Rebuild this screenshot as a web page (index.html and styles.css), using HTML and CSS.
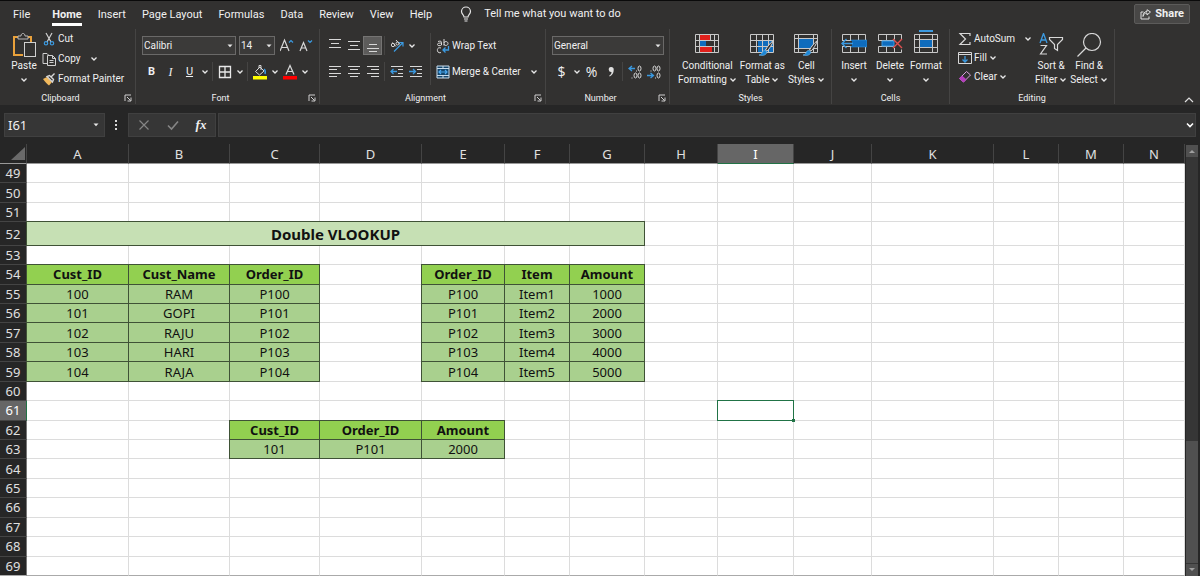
FILE: index.html
```html
<!DOCTYPE html>
<html lang="en">
<head>
  <meta charset="utf-8">
  <title>Double VLOOKUP</title>
  <link rel="stylesheet" href="styles.css">
</head>
<body>

<!-- shared shapes -->
<svg class="defs" aria-hidden="true">
  <symbol id="chev" viewBox="0 0 8 8"><path d="M1.5 2.5 4 5l2.500-2.500" fill="none" stroke="#e8e8e8" stroke-width="1.300"/></symbol>
  <symbol id="tri" viewBox="0 0 8 8"><path d="M1.500 2.500h5L4 5.300z" fill="#e8e8e8"/></symbol>
  <symbol id="launch" viewBox="0 0 8 8"><path d="M1 7V1h6M3 3l3.500 3.500M7 3.500V7H3.500" fill="none" stroke="#d0d0d0"/></symbol>
  <symbol id="brush" viewBox="0 0 18 18"><path d="M16.500 1.500C13 4 10 8 8.500 11l1.500 1.200C12.500 9.500 15 6 16.500 1.500z" fill="#323130" stroke="#d8d8d8"/><path d="M8.500 11.500c-2-.5-3 .8-3.500 2.500-.4 1.200-1.500 1.800-3 2 3 1 7 .5 7.800-2.500z" fill="#1b86d6" stroke="#6cb5ea" stroke-width=".7"/></symbol>
</svg>

<header class="ribbon">
  <nav class="tabs">
    <a href="#" class="file">File</a>
    <a href="#" class="active">Home</a>
    <a href="#">Insert</a>
    <a href="#">Page Layout</a>
    <a href="#">Formulas</a>
    <a href="#">Data</a>
    <a href="#">Review</a>
    <a href="#">View</a>
    <a href="#">Help</a>
    <a href="#" class="tell">
      <svg width="12" height="16" viewBox="0 0 12 16"><path d="M4 11c0-2-2.500-2.700-2.500-5.500a4.500 4.500 0 0 1 9 0C10.500 8.300 8 9 8 11zM4 13h4M4.500 15h3" fill="none" stroke="#e8e8e8" stroke-width="1.200"/></svg>
      Tell me what you want to do
    </a>
    <button class="share">
      <svg width="11" height="11" viewBox="0 0 11 11"><path d="M3.500 3H1v7h8V7.500M3 7.500C3.500 5 5 4 7 4V6l3.500-3L7 .7V2.500C4.500 2.500 3 4.500 3 7.500z" fill="none" stroke="#e0e0e0"/></svg>
      Share
    </button>
  </nav>

  <div class="groups">
    <section class="group">
      <div class="body clipboard">
        <button class="big">
          <svg width="24" height="26" viewBox="0 0 24 26"><path d="M6 4H2v18h9M15 4h4v5" fill="none" stroke="#e9a13b" stroke-width="2"/><path d="M6 6V3h3c0-3.500 4-3.500 4 0h3v3z" fill="#323130" stroke="#b8b8b8"/><rect x="12.500" y="9.500" width="11" height="14" fill="#323130" stroke="#d0d0d0"/></svg>
          <span>Paste</span>
          <svg class="c"><use href="#chev"/></svg>
        </button>
        <div class="stack">
          <button class="line">
            <svg width="14" height="14" viewBox="0 0 14 14"><path d="M4 1l5 9M10 1 5 10" fill="none" stroke="#d0d0d0" stroke-width="1.200"/><circle cx="4" cy="11.300" r="1.700" fill="none" stroke="#3b9ae1" stroke-width="1.200"/><circle cx="10" cy="11.300" r="1.700" fill="none" stroke="#3b9ae1" stroke-width="1.200"/></svg>
            Cut
          </button>
          <button class="line">
            <svg width="14" height="14" viewBox="0 0 14 14"><path d="M5 11.500H1V1.500h4l2 2M5.500 3.500h5l3 3v7h-8zM10.500 3.500v3h3M7.500 8.500h4M7.500 10.500h4" fill="none" stroke="#d0d0d0"/></svg>
            Copy
            <svg class="c far"><use href="#chev"/></svg>
          </button>
          <button class="line">
            <svg width="14" height="14" viewBox="0 0 14 14"><path d="M1 7l4-2 5 5-3 3.500C5 12 3 10 1 7z" fill="#f0b85c"/><path d="M5 4.500l5.500 5.500 1-2.500L7.500 3.500zM9 5l3.500-3.500" fill="none" stroke="#d8d8d8" stroke-width="1.400"/></svg>
            Format Painter
          </button>
        </div>
      </div>
      <h2>Clipboard <svg class="c"><use href="#launch"/></svg></h2>
    </section>

    <section class="group">
      <div class="body rows">
        <div class="row">
          <label class="combo font-name"><select aria-label="Font"><option>Calibri</option></select><svg class="c"><use href="#tri"/></svg></label>
          <label class="combo font-size"><select aria-label="Font size"><option>14</option></select><svg class="c"><use href="#tri"/></svg></label>
          <button class="tool" aria-label="Increase font size"><svg width="16" height="16" viewBox="0 0 16 16"><path d="M0 13 4.500 2 9 13M1.500 9.500h6" fill="none" stroke="#d8d8d8" stroke-width="1.200"/><path d="M9 4.500l2-2 2 2" fill="none" stroke="#3b9ae1" stroke-width="1.200"/></svg></button>
          <button class="tool" aria-label="Decrease font size"><svg width="16" height="16" viewBox="0 0 16 16"><path d="M1 13 4.500 4.500 8 13M2.500 10h4" fill="none" stroke="#d8d8d8" stroke-width="1.200"/><path d="M9 2.500l2 2 2-2" fill="none" stroke="#3b9ae1" stroke-width="1.200"/></svg></button>
        </div>
        <div class="row">
          <button class="tool"><b>B</b></button>
          <button class="tool serif"><i>I</i></button>
          <button class="tool"><u>U</u></button>
          <button class="drop" aria-label="Underline options"><svg class="c"><use href="#chev"/></svg></button>
          <span class="sep"></span>
          <button class="tool" aria-label="Borders"><svg width="14" height="14" viewBox="0 0 14 14"><path d="M1.500 1.500h11v11h-11zM7 1.500v11M1.500 7h11" fill="none" stroke="#e8e8e8" stroke-width="1.300"/></svg></button>
          <button class="drop" aria-label="Border options"><svg class="c"><use href="#chev"/></svg></button>
          <span class="sep"></span>
          <button class="tool" aria-label="Fill color"><svg width="14" height="16" viewBox="0 0 14 16"><path d="M2.500 7.500 7 3l4 4-4.500 4zM6 4V1.500h2V6" fill="none" stroke="#d8d8d8"/><path d="M11 5c1.500 1 1.500 3 1 5" fill="none" stroke="#3b9ae1" stroke-width="1.500"/><path d="M0 12h14v3.500H0z" fill="#ff0"/></svg></button>
          <button class="drop" aria-label="Fill colors"><svg class="c"><use href="#chev"/></svg></button>
          <button class="tool" aria-label="Font color"><svg width="14" height="16" viewBox="0 0 14 16"><path d="M3 10.500 7 1.500l4 9M4.500 7.500h5" fill="none" stroke="#d8d8d8" stroke-width="1.200"/><path d="M0 12h14v3.500H0z" fill="#f00"/></svg></button>
          <button class="drop" aria-label="Font colors"><svg class="c"><use href="#chev"/></svg></button>
        </div>
      </div>
      <h2>Font <svg class="c"><use href="#launch"/></svg></h2>
    </section>

    <section class="group">
      <div class="body split">
        <div class="rows">
          <div class="row">
            <button class="tool" aria-label="Top align"><svg width="14" height="14" viewBox="0 0 14 14"><path d="M1 .5h12M3 4.500h8M1 8.500h12" stroke="#d8d8d8"/></svg></button>
            <button class="tool" aria-label="Middle align"><svg width="14" height="14" viewBox="0 0 14 14"><path d="M1 2.500h12M3 6.500h8M1 10.500h12" stroke="#d8d8d8"/></svg></button>
            <button class="tool on" aria-label="Bottom align"><svg width="14" height="14" viewBox="0 0 14 14"><path d="M3 5.500h8M1 9.500h12M3 12.500h8" stroke="#d8d8d8"/></svg></button>
            <span class="sep"></span>
            <button class="tool" aria-label="Orientation"><svg width="16" height="16" viewBox="0 0 16 16"><g fill="none" stroke="#d8d8d8"><circle cx="4" cy="7" r="1.700"/><path d="M3.500 4.500l3.500 4M7 2l4 4.500"/><circle cx="8.500" cy="5.500" r="1.500"/></g><path d="M5 13.500l8.500-8.500M10 4.500h4v4" fill="none" stroke="#3b9ae1" stroke-width="1.200"/></svg></button>
            <button class="drop" aria-label="Orientation options"><svg class="c"><use href="#chev"/></svg></button>
          </div>
          <div class="row">
            <button class="tool" aria-label="Align left"><svg width="14" height="14" viewBox="0 0 14 14"><path d="M1 1.500h12M1 4.500h8M1 8.500h12M1 11.500h8" stroke="#d8d8d8"/></svg></button>
            <button class="tool" aria-label="Center"><svg width="14" height="14" viewBox="0 0 14 14"><path d="M1 1.500h12M3 4.500h8M1 8.500h12M3 11.500h8" stroke="#d8d8d8"/></svg></button>
            <button class="tool" aria-label="Align right"><svg width="14" height="14" viewBox="0 0 14 14"><path d="M1 1.500h12M5 4.500h8M1 8.500h12M5 11.500h8" stroke="#d8d8d8"/></svg></button>
            <span class="sep"></span>
            <button class="tool" aria-label="Decrease indent"><svg width="14" height="14" viewBox="0 0 14 14"><path d="M1 1.500h12M8 4.500h5M8 8.500h5M1 11.500h12" stroke="#d8d8d8"/><path d="M7 6.500H1.500M3.500 4 1 6.500 3.500 9" fill="none" stroke="#3b9ae1" stroke-width="1.300"/></svg></button>
            <button class="tool" aria-label="Increase indent"><svg width="14" height="14" viewBox="0 0 14 14"><path d="M1 1.500h12M8 4.500h5M8 8.500h5M1 11.500h12" stroke="#d8d8d8"/><path d="M0 6.500h5.500M4 4 6.500 6.500 4 9" fill="none" stroke="#3b9ae1" stroke-width="1.300"/></svg></button>
          </div>
        </div>
        <span class="sep tall"></span>
        <div class="rows">
          <button class="line">
            <svg width="14" height="16" viewBox="0 0 14 16"><g fill="none" stroke="#d8d8d8"><path d="M2 3.500c3-1 3.500 0 3.500 1v2.500c-1.500 1-4 1-4-.5s2-1.500 4-1.500M8 1v6.500M8 5c0-2 4-2 4 .5S8 8 8 6M5 10c-3-1-4 1-3.500 3s2.500 2 3.500 1.500"/></g><path d="M12.500 8v4H7.500M9.500 9.500 7 12l2.500 2.500" fill="none" stroke="#3b9ae1" stroke-width="1.300"/></svg>
            Wrap Text
          </button>
          <button class="line">
            <svg width="14" height="14" viewBox="0 0 14 14"><path d="M1 1h12v12H1zM1 3.500h12M1 10.500h12M7 1v2.500M7 10.500V13" fill="#16466b" stroke="#c8dcec"/><path d="M3 7h8M5 5 3 7l2 2M9 5l2 2-2 2" fill="none" stroke="#4ba9f0" stroke-width="1.200"/></svg>
            Merge &amp; Center
            <svg class="c far"><use href="#chev"/></svg>
          </button>
        </div>
      </div>
      <h2>Alignment <svg class="c"><use href="#launch"/></svg></h2>
    </section>

    <section class="group">
      <div class="body rows">
        <div class="row">
          <label class="combo number"><select aria-label="Number format"><option>General</option></select><svg class="c"><use href="#tri"/></svg></label>
        </div>
        <div class="row">
          <button class="tool sign">$</button>
          <button class="drop" aria-label="Currency options"><svg class="c"><use href="#chev"/></svg></button>
          <button class="tool sign">%</button>
          <button class="tool" aria-label="Comma style"><svg width="10" height="14" viewBox="0 0 10 14"><path d="M5 2a2.500 2.500 0 0 1 2.700 3c0 3-1.200 5-4 6.500l-.5-.7C5 9.500 5.500 8.500 5.500 7A2.500 2.500 0 1 1 5 2z" fill="#e0e0e0"/></svg></button>
          <span class="sep"></span>
          <button class="tool" aria-label="Increase decimal"><svg width="14" height="14" viewBox="0 0 14 14"><path d="M7 3.500H1.500M4 1 1 3.500 4 6" fill="none" stroke="#3b9ae1" stroke-width="1.300"/><g fill="none" stroke="#d8d8d8"><ellipse cx="11.500" cy="3.500" rx="1.500" ry="2.500"/><ellipse cx="7.500" cy="10.500" rx="1.500" ry="2.500"/><ellipse cx="11.500" cy="10.500" rx="1.500" ry="2.500"/><path d="M8 6h1M3.500 13h1"/></g></svg></button>
          <button class="tool" aria-label="Decrease decimal"><svg width="14" height="14" viewBox="0 0 14 14"><path d="M0 10.500h6M3.500 8l3 2.500-3 2.500" fill="none" stroke="#3b9ae1" stroke-width="1.300"/><g fill="none" stroke="#d8d8d8"><ellipse cx="7.500" cy="3.500" rx="1.500" ry="2.500"/><ellipse cx="11.500" cy="3.500" rx="1.500" ry="2.500"/><ellipse cx="11.500" cy="10.500" rx="1.500" ry="2.500"/><path d="M3.500 6h1M8 13h1"/></g></svg></button>
        </div>
      </div>
      <h2>Number <svg class="c"><use href="#launch"/></svg></h2>
    </section>

    <section class="group">
      <div class="body bigs styles">
        <button class="big">
          <svg width="26" height="22" viewBox="0 0 26 22"><path d="M1.500 1.500h23v18h-23zM5.500 1.500v18M16.500 1.500v18M20.500 1.500v18M1.500 7.500h23M1.500 13.500h23" fill="none" stroke="#c8c8c8"/><path d="M6 2h10v5H6zM6 14h12v5H6z" fill="#e0201b"/><path d="M6 8h6v5H6z" fill="#0f6cbd"/><path d="M12 8h5v5h-5z" fill="#323130"/></svg>
          <span>Conditional</span>
          <span>Formatting <svg class="c"><use href="#chev"/></svg></span>
        </button>
        <button class="big">
          <svg width="26" height="24" viewBox="0 0 26 24"><path d="M9 8h15v12H9z" fill="#0f6cbd"/><path d="M1.500 1.500h23v18h-23zM7.500 1.500v18M13.500 1.500v18M19.500 1.500v18M1.500 7.500h23M1.500 13.500h23" fill="none" stroke="#c8c8c8"/><use href="#brush" x="8" y="6" width="18" height="18"/></svg>
          <span>Format as</span>
          <span>Table <svg class="c"><use href="#chev"/></svg></span>
        </button>
        <button class="big">
          <svg width="26" height="24" viewBox="0 0 26 24"><path d="M5 6h16v10H5z" fill="#0f6cbd"/><path d="M1.500 1.500h23v18h-23zM5.500 1.500v18M20.500 1.500v18M1.500 5.500h23M1.500 15.500h23" fill="none" stroke="#c8c8c8"/><use href="#brush" x="8" y="6" width="18" height="18"/></svg>
          <span>Cell</span>
          <span>Styles <svg class="c"><use href="#chev"/></svg></span>
        </button>
      </div>
      <h2>Styles</h2>
    </section>

    <section class="group">
      <div class="body bigs cells">
        <button class="big">
          <svg width="26" height="22" viewBox="0 0 26 22"><path d="M1.500 1.500h23v18h-23zM9.500 1.500v18M17.500 1.500v18M1.500 7.500h23M1.500 13.500h23" fill="none" stroke="#c8c8c8"/><path d="M10 7h16v7H10z" fill="#0f6cbd" stroke="#3b9ae1" stroke-width=".5"/><path d="M0 8h11v5H0z" fill="#323130"/><path d="M12 10.500H1M5.500 6 1 10.500 5.500 15" fill="none" stroke="#3b9ae1" stroke-width="1.400"/></svg>
          <span>Insert</span>
          <svg class="c"><use href="#chev"/></svg>
        </button>
        <button class="big">
          <svg width="26" height="22" viewBox="0 0 26 22"><path d="M1.500 7.500v-6h23v5M1.500 7.500h15M1.500 13.500v6h23v-3M1.500 13.500h15M9.500 1.500v18M17.500 1.500v5M17.500 15v4.500" fill="none" stroke="#c8c8c8"/><path d="M5 8h12v5H5z" fill="#0f6cbd" stroke="#3b9ae1"/><path d="M16 6l9 9M25 6l-9 9" stroke="#e05050" stroke-width="1.400"/></svg>
          <span>Delete</span>
          <svg class="c"><use href="#chev"/></svg>
        </button>
        <button class="big format">
          <svg width="26" height="26" viewBox="0 0 26 26"><path d="M6 1h14" stroke="#3b9ae1" stroke-width="2"/><path d="M1.500 4.500h23v18h-23zM6.500 4.500v18M19.500 4.500v18M1.500 9.500h23M1.500 17.500h23" fill="none" stroke="#c8c8c8"/><path d="M7 10h12v7H7z" fill="#0f6cbd"/></svg>
          <span>Format</span>
          <svg class="c"><use href="#chev"/></svg>
        </button>
      </div>
      <h2>Cells</h2>
    </section>

    <section class="group">
      <div class="body editing">
        <div class="stack">
          <button class="line">
            <svg width="14" height="14" viewBox="0 0 14 14"><path d="M12 4V1.500H2L7.500 7 2 12.500h10V10" fill="none" stroke="#d8d8d8" stroke-width="1.200"/></svg>
            AutoSum
            <svg class="c far"><use href="#chev"/></svg>
          </button>
          <button class="line">
            <svg width="14" height="14" viewBox="0 0 14 14"><path d="M.5 1.500h13v11H.5zM.5 3.500h13" fill="none" stroke="#d8d8d8"/><path d="M7 5v6M4.500 8.500 7 11l2.500-2.500" fill="none" stroke="#3b9ae1" stroke-width="1.300"/></svg>
            Fill <svg class="c"><use href="#chev"/></svg>
          </button>
          <button class="line">
            <svg width="14" height="14" viewBox="0 0 14 14"><path d="M1.500 8.500 8.500 1.500l4 3.500-7 7z" fill="none" stroke="#d9a0dc"/><path d="M1 8.500 4 5.500 8.500 9.500l-3 3z" fill="#b53cbc"/></svg>
            Clear <svg class="c"><use href="#chev"/></svg>
          </button>
        </div>
        <button class="big">
          <svg width="26" height="24" viewBox="0 0 26 24"><path d="M2 10 5.500 .5 9 10M3 7h5" fill="none" stroke="#3b9ae1" stroke-width="1.300"/><path d="M2.500 12.500h6l-6 8.500h6.500" fill="none" stroke="#d8d8d8" stroke-width="1.200"/><path d="M11.500 4.500h13v2l-5 5v6l-3-2v-4l-5-5z" fill="none" stroke="#d8d8d8" stroke-width="1.200"/></svg>
          <span>Sort &amp;</span>
          <span>Filter <svg class="c"><use href="#chev"/></svg></span>
        </button>
        <button class="big">
          <svg width="26" height="26" viewBox="0 0 26 26"><circle cx="16" cy="9" r="8.500" fill="none" stroke="#d8d8d8" stroke-width="1.200"/><path d="M10 15l-8.500 8.500" stroke="#d8d8d8" stroke-width="1.300"/></svg>
          <span>Find &amp;</span>
          <span>Select <svg class="c"><use href="#chev"/></svg></span>
        </button>
      </div>
      <h2>Editing</h2>
    </section>

    <button class="collapse" aria-label="Collapse the ribbon"><svg width="10" height="8" viewBox="0 0 10 8"><path d="M1 6l4-4 4 4" fill="none" stroke="#e0e0e0" stroke-width="1.200"/></svg></button>
  </div>
</header>

<div class="formula">
  <div class="name-box">
    <input type="text" value="I61" aria-label="Name box">
    <button class="drop" aria-label="Names"><svg class="c"><use href="#tri"/></svg></button>
  </div>
  <svg class="dots" width="4" height="12" viewBox="0 0 4 12"><path d="M1 1h2v2H1zM1 5h2v2H1zM1 9h2v2H1z" fill="#d8d8d8"/></svg>
  <div class="entry">
    <button aria-label="Cancel"><svg width="12" height="12" viewBox="0 0 12 12"><path d="M1.500 1.500l9 9M10.500 1.500l-9 9" stroke="#858585" stroke-width="1.200"/></svg></button>
    <button aria-label="Enter"><svg width="12" height="12" viewBox="0 0 12 12"><path d="M1 6.500l3.500 3.500L11 2.500" fill="none" stroke="#858585" stroke-width="1.600"/></svg></button>
    <button class="fx">fx</button>
  </div>
  <div class="formula-box">
    <input type="text" aria-label="Formula">
    <button class="drop" aria-label="Expand formula bar"><svg class="c" viewBox="0 0 8 8"><path d="M1 2.500 4 5.500l3-3" fill="none" stroke="#fff" stroke-width="1.600"/></svg></button>
  </div>
</div>

<main class="sheet">
  <table>
    <colgroup>
      <col class="w-num"><col class="w-a"><col class="w-b"><col class="w-c"><col class="w-d"><col class="w-e"><col class="w-f"><col class="w-g"><col class="w-h"><col class="w-i"><col class="w-j"><col class="w-k"><col class="w-l"><col class="w-m"><col class="w-n">
    </colgroup>
    <thead>
      <tr><th class="corner"><svg width="16" height="16" viewBox="0 0 16 16"><path d="M15 1v13H1z" fill="#6a6a6a"/></svg></th><th>A</th><th>B</th><th>C</th><th>D</th><th>E</th><th>F</th><th>G</th><th>H</th><th class="sel">I</th><th>J</th><th>K</th><th>L</th><th>M</th><th>N</th></tr>
    </thead>
    <tbody>
      <tr><th>49</th><td></td><td></td><td></td><td></td><td></td><td></td><td></td><td></td><td></td><td></td><td></td><td></td><td></td><td></td></tr>
      <tr><th>50</th><td></td><td></td><td></td><td></td><td></td><td></td><td></td><td></td><td></td><td></td><td></td><td></td><td></td><td></td></tr>
      <tr><th>51</th><td></td><td></td><td></td><td></td><td></td><td></td><td></td><td></td><td></td><td></td><td></td><td></td><td></td><td></td></tr>
      <tr class="title"><th>52</th><td colspan="7" class="t">Double VLOOKUP</td><td></td><td></td><td></td><td></td><td></td><td></td><td></td></tr>
      <tr><th>53</th><td></td><td></td><td></td><td></td><td></td><td></td><td></td><td></td><td></td><td></td><td></td><td></td><td></td><td></td></tr>
      <tr><th>54</th><td class="h">Cust_ID</td><td class="h">Cust_Name</td><td class="h">Order_ID</td><td></td><td class="h">Order_ID</td><td class="h">Item</td><td class="h">Amount</td><td></td><td></td><td></td><td></td><td></td><td></td><td></td></tr>
      <tr><th>55</th><td class="v">100</td><td class="v">RAM</td><td class="v">P100</td><td></td><td class="v">P100</td><td class="v">Item1</td><td class="v">1000</td><td></td><td></td><td></td><td></td><td></td><td></td><td></td></tr>
      <tr><th>56</th><td class="v">101</td><td class="v">GOPI</td><td class="v">P101</td><td></td><td class="v">P101</td><td class="v">Item2</td><td class="v">2000</td><td></td><td></td><td></td><td></td><td></td><td></td><td></td></tr>
      <tr><th>57</th><td class="v">102</td><td class="v">RAJU</td><td class="v">P102</td><td></td><td class="v">P102</td><td class="v">Item3</td><td class="v">3000</td><td></td><td></td><td></td><td></td><td></td><td></td><td></td></tr>
      <tr><th>58</th><td class="v">103</td><td class="v">HARI</td><td class="v">P103</td><td></td><td class="v">P103</td><td class="v">Item4</td><td class="v">4000</td><td></td><td></td><td></td><td></td><td></td><td></td><td></td></tr>
      <tr><th>59</th><td class="v">104</td><td class="v">RAJA</td><td class="v">P104</td><td></td><td class="v">P104</td><td class="v">Item5</td><td class="v">5000</td><td></td><td></td><td></td><td></td><td></td><td></td><td></td></tr>
      <tr><th>60</th><td></td><td></td><td></td><td></td><td></td><td></td><td></td><td></td><td></td><td></td><td></td><td></td><td></td><td></td></tr>
      <tr><th class="sel">61</th><td></td><td></td><td></td><td></td><td></td><td></td><td></td><td></td><td class="cursor"></td><td></td><td></td><td></td><td></td><td></td></tr>
      <tr><th>62</th><td></td><td></td><td class="h">Cust_ID</td><td class="h">Order_ID</td><td class="h">Amount</td><td></td><td></td><td></td><td></td><td></td><td></td><td></td><td></td><td></td></tr>
      <tr><th>63</th><td></td><td></td><td class="v">101</td><td class="v">P101</td><td class="v">2000</td><td></td><td></td><td></td><td></td><td></td><td></td><td></td><td></td><td></td></tr>
      <tr><th>64</th><td></td><td></td><td></td><td></td><td></td><td></td><td></td><td></td><td></td><td></td><td></td><td></td><td></td><td></td></tr>
      <tr><th>65</th><td></td><td></td><td></td><td></td><td></td><td></td><td></td><td></td><td></td><td></td><td></td><td></td><td></td><td></td></tr>
      <tr><th>66</th><td></td><td></td><td></td><td></td><td></td><td></td><td></td><td></td><td></td><td></td><td></td><td></td><td></td><td></td></tr>
      <tr><th>67</th><td></td><td></td><td></td><td></td><td></td><td></td><td></td><td></td><td></td><td></td><td></td><td></td><td></td><td></td></tr>
      <tr><th>68</th><td></td><td></td><td></td><td></td><td></td><td></td><td></td><td></td><td></td><td></td><td></td><td></td><td></td><td></td></tr>
      <tr class="last"><th>69</th><td></td><td></td><td></td><td></td><td></td><td></td><td></td><td></td><td></td><td></td><td></td><td></td><td></td><td></td></tr>
    </tbody>
  </table>
  <div class="scroll">
    <button aria-label="Scroll up"><svg width="8" height="6" viewBox="0 0 8 6"><path d="M1 5h6L4 2z" fill="#a0a0a0"/></svg></button>
    <div class="track"><div class="thumb"></div></div>
    <button aria-label="Scroll down"><svg width="8" height="6" viewBox="0 0 8 6"><path d="M1 1h6L4 4z" fill="#a0a0a0"/></svg></button>
  </div>
</main>

</body>
</html>
```
FILE: styles.css
```css
* { box-sizing: border-box; }
body { margin: 0; height: 100vh; display: flex; flex-direction: column; overflow: hidden; background: #262626; color: #f0f0f0; font: 10px/14px Roboto, "Noto Sans", sans-serif; }
button, input, select { font: inherit; color: inherit; background: none; border: 0; padding: 0; margin: 0; }
a { color: inherit; text-decoration: none; }
svg { display: block; flex: none; }
.defs { display: none; }
.c { width: 8px; height: 8px; }

/* tabs */
.ribbon { background: #323130; border-top: 1px solid #0a0a0a; }
.tabs { display: flex; align-items: center; gap: 16px; height: 26px; padding: 0 10px 0 13px; font-size: 11px; white-space: nowrap; }
.tabs a { height: 23px; line-height: 24px; }
.tabs .file { margin-right: 6px; }
.tabs .active { font-weight: bold; border-bottom: 3px solid #fff; }
.tabs .tell { display: flex; align-items: center; gap: 12px; margin-left: 12px; }
.share { display: flex; align-items: center; gap: 4px; height: 20px; margin-left: auto; padding: 0 5px; font-weight: bold; background: #484746; border: 1px solid #5c5b5a; border-radius: 2px; }

/* ribbon groups */
.groups { display: grid; grid-template-columns: 136px 184px 226px 124px 162px 118px 165px 1fr; padding: 2px 0; height: 78px; }
.group { display: flex; flex-direction: column; border-right: 1px solid #454443; }
.group h2 { margin: 0; display: grid; grid-template-columns: 1fr auto; align-items: center; font-size: 9px; font-weight: normal; line-height: 12px; text-align: center; }
.group h2 svg { margin: 0 3px; }
.body { height: 63px; white-space: nowrap; }
.clipboard, .editing, .split, .bigs { display: flex; }
.clipboard { padding-left: 8px; gap: 2px; }
.stack .line { height: 20px; }
.editing { padding-left: 8px; gap: 3px; }
.editing .stack { width: 74px; }
.editing .line { height: 19px; }
.line { display: flex; align-items: center; gap: 2px; height: 19px; }
.far { margin-left: 7px; }
.big { display: flex; flex-direction: column; align-items: center; min-width: 32px; height: 58px; padding-top: 4px; line-height: 14px; }
.big > svg:first-child { margin-bottom: auto; }
.big > .c { margin: 3px 0; }
.big span { display: flex; align-items: center; gap: 2px; }
.bigs { padding-left: 8px; }
.styles { gap: 3px; }
.cells { gap: 4px; padding-left: 6px; }
.format { padding-top: 1px; }
.rows { display: flex; flex-direction: column; gap: 7px; padding-top: 7px; }
.body.rows { padding-left: 6px; }
.row { display: flex; align-items: center; height: 19px; }
.split { padding-left: 5px; }
.tool { display: flex; align-items: center; justify-content: center; width: 19px; height: 19px; font-size: 11px; }
.tool.on { background: #5d5c5b; border: 1px solid #757473; }
.serif { font-family: "Liberation Serif", serif; font-size: 12px; }
.sign { font: 14px "Open Sans", sans-serif; }
.drop { display: flex; align-items: center; justify-content: center; width: 11px; height: 19px; }
.sep { width: 1px; height: 19px; margin: 0 2px; background: #454443; }
.sep.tall { height: 52px; margin: 4px 5px 0 5px; }
.combo { display: grid; height: 19px; margin-right: 3px; background: #3b3a39; border: 1px solid #6a6968; }
.combo select, .combo svg { grid-area: 1 / 1; }
.combo select { appearance: none; width: 100%; padding-left: 1px; }
.combo svg { align-self: center; justify-self: end; margin-right: 1px; pointer-events: none; }
.font-name { width: 94px; }
.font-size { width: 36px; }
.number { width: 112px; }
.collapse { justify-self: end; align-self: end; padding: 0 6px 0 0; }

/* formula bar */
.formula { display: flex; align-items: center; height: 39px; padding: 0 4px; }
.name-box, .entry, .formula-box { display: flex; align-items: center; height: 24px; background: #363636; border: 1px solid #404040; }
.name-box { width: 101px; font: 13px "Noto Sans", sans-serif; }
.name-box input { flex: 1; min-width: 0; padding-left: 3px; }
.name-box .drop { width: 16px; }
.dots { margin: 0 10px 0 9px; }
.entry { width: 88px; justify-content: space-around; margin-right: 2px; }
.fx { font: italic bold 13px "Liberation Serif", serif; }
.formula-box { flex: 1; }
.formula-box input { flex: 1; }

/* grid */
.sheet { flex: 1; min-height: 0; display: flex; }
table { flex: 1; height: 100%; table-layout: fixed; border-collapse: separate; border-spacing: 0; background: #fff; color: #111; font: 13px/16px "Noto Sans", "Open Sans", sans-serif; text-align: center; }
.w-num { width: 27px; } .w-a { width: 102px; } .w-b { width: 101px; } .w-c { width: 90px; } .w-d { width: 102px; }
.w-e { width: 83px; } .w-f { width: 65px; } .w-g { width: 75px; } .w-h { width: 73px; } .w-i { width: 76px; }
.w-j { width: 78px; } .w-k { width: 122px; } .w-l { width: 65px; } .w-m { width: 65px; } .w-n { width: 61px; }
th, td { height: 19px; padding: 0; border-right: 1px solid #dcdcdc; border-bottom: 1px solid #dcdcdc; }
th { font-weight: normal; color: #e0e0e0; background: #262626; border-color: #444; }
thead th { height: 20px; border-bottom-color: #999; }
tbody th { border-right-color: #777; }
th.sel { background: #666; color: #fff; }
thead .sel { border-bottom-color: #217346; }
tbody th.sel { border-right-color: #217346; }
.corner svg { margin-left: auto; }
.title th, .title td { height: 23px; }
.last th, .last td { border-bottom-color: #aaa; }
.t, .h, .v { border-color: #3f5236; box-shadow: -1px 0 #3f5236, 0 -1px #3f5236, -1px -1px #3f5236; }
.t { background: #c6e0b4; font-size: 15px; font-weight: bold; }
.h { background: #92d050; font-weight: bold; }
.v { background: #a9d08e; }
.cursor { position: relative; border-color: #217346; box-shadow: -1px 0 #217346, 0 -1px #217346, -1px -1px #217346; }
.cursor::after { content: ""; position: absolute; right: -2px; bottom: -2px; width: 3px; height: 3px; background: #217346; }

/* scrollbar */
.scroll { display: flex; flex-direction: column; width: 15px; padding: 1px 2px 0 1px; }
.scroll button { display: flex; align-items: center; justify-content: center; height: 12px; background: #505050; }
.track { flex: 1; display: flex; flex-direction: column; justify-content: flex-end; background: #363636; }
.thumb { height: 30%; margin-bottom: 1px; background: #505050; }
```
